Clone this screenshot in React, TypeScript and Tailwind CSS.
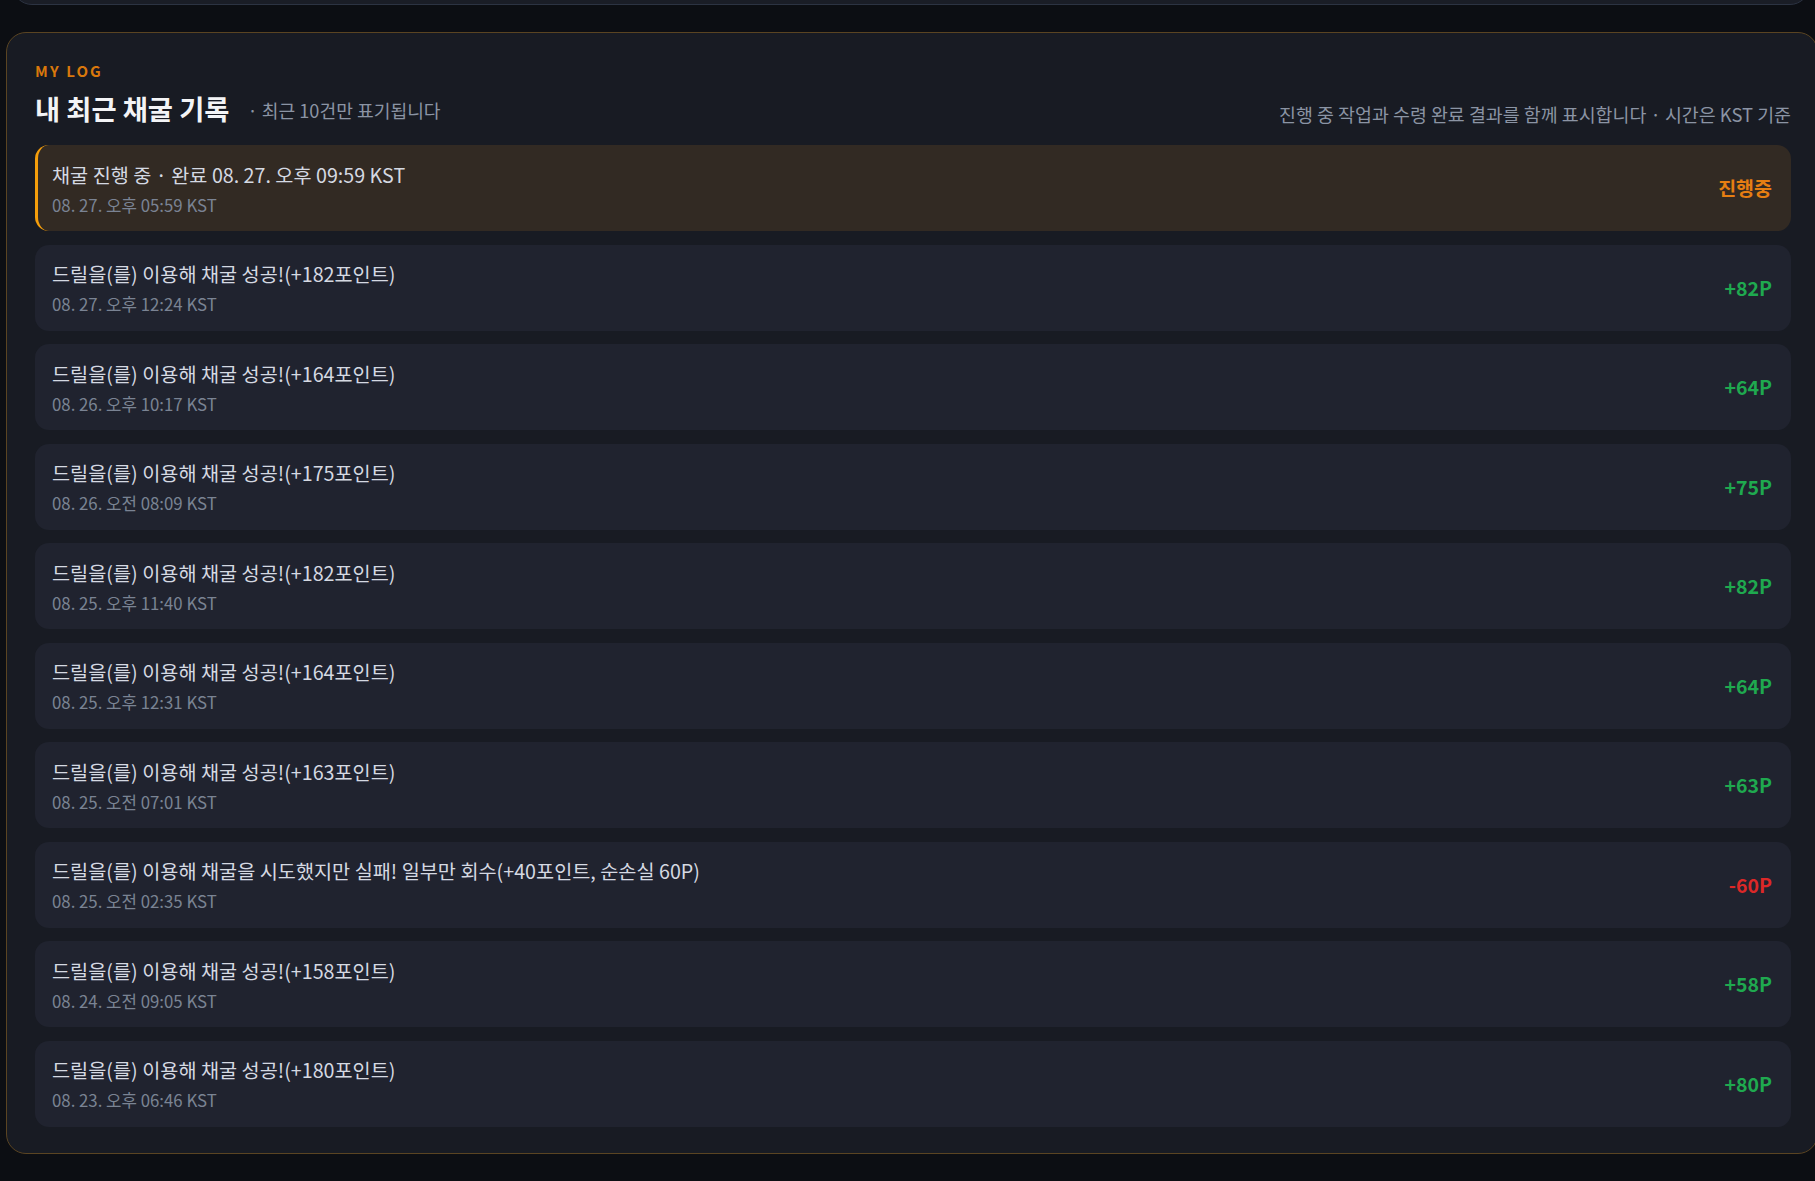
import React from 'react'

type LogItem = {
  title: string
  time: string
  value: string
  kind: 'pending' | 'plus' | 'minus'
}

const logs: LogItem[] = [
  { title: '채굴 진행 중 · 완료 08. 27. 오후 09:59 KST', time: '08. 27. 오후 05:59 KST', value: '진행중', kind: 'pending' },
  { title: '드릴을(를) 이용해 채굴 성공!(+182포인트)', time: '08. 27. 오후 12:24 KST', value: '+82P', kind: 'plus' },
  { title: '드릴을(를) 이용해 채굴 성공!(+164포인트)', time: '08. 26. 오후 10:17 KST', value: '+64P', kind: 'plus' },
  { title: '드릴을(를) 이용해 채굴 성공!(+175포인트)', time: '08. 26. 오전 08:09 KST', value: '+75P', kind: 'plus' },
  { title: '드릴을(를) 이용해 채굴 성공!(+182포인트)', time: '08. 25. 오후 11:40 KST', value: '+82P', kind: 'plus' },
  { title: '드릴을(를) 이용해 채굴 성공!(+164포인트)', time: '08. 25. 오후 12:31 KST', value: '+64P', kind: 'plus' },
  { title: '드릴을(를) 이용해 채굴 성공!(+163포인트)', time: '08. 25. 오전 07:01 KST', value: '+63P', kind: 'plus' },
  { title: '드릴을(를) 이용해 채굴을 시도했지만 실패! 일부만 회수(+40포인트, 순손실 60P)', time: '08. 25. 오전 02:35 KST', value: '-60P', kind: 'minus' },
  { title: '드릴을(를) 이용해 채굴 성공!(+158포인트)', time: '08. 24. 오전 09:05 KST', value: '+58P', kind: 'plus' },
  { title: '드릴을(를) 이용해 채굴 성공!(+180포인트)', time: '08. 23. 오후 06:46 KST', value: '+80P', kind: 'plus' },
]

function LogRow({ item }: { item: LogItem }) {
  const pending = item.kind === 'pending'
  return (
    <div
      className={
        pending
          ? 'h-[86px] flex items-center justify-between rounded-[14px] bg-[#322a23] border-l-[3px] border-[#f59e0b] pl-[14px] pr-[19px]'
          : 'h-[86px] flex items-center justify-between rounded-[14px] bg-[#20232f] pl-[17px] pr-[19px]'
      }
    >
      <div className="flex flex-col">
        <div className="text-[19.7px] leading-[28px] text-[#d5d9e2]">{item.title}</div>
        <div className="text-[16.8px] leading-[22px] mt-[5px] text-[#7a8393]">{item.time}</div>
      </div>
      <div
        className={
          item.kind === 'pending'
            ? 'text-[19.5px] font-bold text-[#e67e12]'
            : item.kind === 'plus'
            ? 'text-[19.5px] font-bold text-[#1fa94f]'
            : 'text-[19.5px] font-bold text-[#dc2828]'
        }
      >
        {item.value}
      </div>
    </div>
  )
}

export default function App() {
  return (
    <div
      className="min-h-screen bg-[#0c0e13] overflow-hidden"
      style={{ fontFamily: '"Noto Sans CJK KR", "Noto Sans", sans-serif' }}
    >
      {/* bottom of previous card */}
      <div className="h-[5px] overflow-hidden pl-[12px] pr-[5px]">
        <div className="h-[40px] -mt-[35px] rounded-[20px] bg-[#1a1d26] border border-[#2c3342]" />
      </div>

      {/* log card */}
      <div className="ml-[6px] mr-[-3px] mt-[27px] rounded-[20px] border border-[#5a4422] bg-[#181b23] pl-[28px] pr-[26px] pt-[28px] pb-[26px]">
        <div className="text-[15px] font-bold tracking-[0.14em] text-[#d9780c] leading-[20px]">MY LOG</div>
        <div className="flex items-end justify-between mt-[9px]">
          <div className="flex items-center">
            <h1 className="text-[27.3px] font-bold text-[#f3f4f6] leading-[36px]">내 최근 채굴 기록</h1>
            <span className="ml-[18px] text-[18.2px] text-[#8b94a4] mt-[5px]">· 최근 10건만 표기됩니다</span>
          </div>
          <div className="text-[18.4px] text-[#8b94a4] leading-[24px]">
            진행 중 작업과 수령 완료 결과를 함께 표시합니다 · 시간은 KST 기준
          </div>
        </div>

        <div className="mt-[19px] flex flex-col gap-[13.5px]">
          {logs.map((item, i) => (
            <LogRow key={i} item={item} />
          ))}
        </div>
      </div>
    </div>
  )
}
